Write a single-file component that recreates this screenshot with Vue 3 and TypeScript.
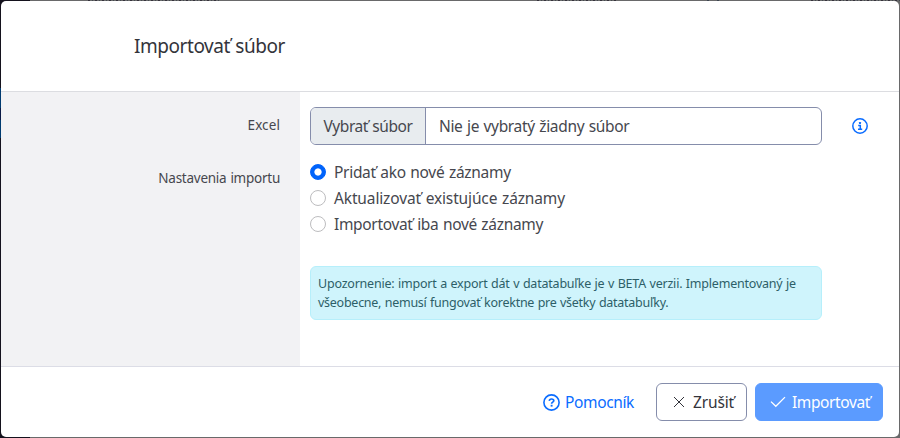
<script setup lang="ts">
import { ref } from 'vue'

interface Option {
  value: string
  label: string
}

const options: Option[] = [
  { value: 'append', label: 'Pridať ako nové záznamy' },
  { value: 'update', label: 'Aktualizovať existujúce záznamy' },
  { value: 'onlynew', label: 'Importovať iba nové záznamy' },
]
const mode = ref('append')
</script>

<template>
  <div class="backdrop">
    <section class="dialog" role="dialog">
      <header class="header">
        <h5 class="title">Importovať súbor</h5>
      </header>

      <div class="body">
        <div class="labels">
          <div class="label label-file">Excel</div>
          <div class="label label-mode">Nastavenia importu</div>
        </div>
        <div class="fields">
          <div class="file-row">
            <div class="file">
              <span class="file-button">Vybrať súbor</span>
              <span class="file-name">Nie je vybratý žiadny súbor</span>
            </div>
            <svg class="info" viewBox="0 0 16 16" fill="none">
              <circle cx="8" cy="8" r="7.2" stroke="currentColor" stroke-width="1.5" />
              <path d="M6.2 7.5H8.3V11.2M6 11.3H10.2" stroke="currentColor" stroke-width="1.5" />
              <rect x="7" y="4" width="2" height="2" rx=".4" fill="currentColor" />
            </svg>
          </div>

          <div class="radios">
            <label v-for="o in options" :key="o.value" class="radio" :class="o.value">
              <input v-model="mode" type="radio" name="mode" :value="o.value" />
              <span>{{ o.label }}</span>
            </label>
          </div>

          <div class="alert">
            <div class="line-one">Upozornenie: import a export dát v datatabuľke je v BETA verzii. Implementovaný je</div>
            <div class="line-two">všeobecne, nemusí fungovať korektne pre všetky datatabuľky.</div>
          </div>
        </div>
      </div>

      <footer class="footer">
        <a class="help">
          <svg class="help-icon" viewBox="0 0 17 17" fill="none" stroke="currentColor">
            <circle cx="8.5" cy="8.5" r="7.6" stroke-width="1.6" />
            <path d="M6.3 6.9C6.4 5.6 7.3 5 8.5 5S10.8 5.7 10.8 6.8C10.8 8.2 8.6 8.1 8.6 9.7" stroke-width="1.7" />
            <path d="M8.6 10.8V12.6" stroke-width="1.9" />
          </svg>
          <span>Pomocník</span>
        </a>
        <button class="btn cancel" type="button">
          <svg class="x-icon" viewBox="0 0 12 12" fill="none" stroke="currentColor">
            <path d="M1 1L11 11M11 1L1 11" stroke-width="1" />
          </svg>
          <span>Zrušiť</span>
        </button>
        <button class="btn submit" type="button">
          <svg class="check-icon" viewBox="0 0 16 12" fill="none" stroke="currentColor">
            <path d="M1 5.6L5.8 10.3L15 1.1" stroke-width="1.3" />
          </svg>
          <span>Importovať</span>
        </button>
      </footer>
    </section>
  </div>
</template>

<style>
body {
  margin: 0;
}
</style>

<style scoped>
* {
  box-sizing: border-box;
}
.backdrop {
  width: 900px;
  height: 438px;
  padding: 1px;
  overflow: hidden;
  font-family: 'Noto Sans', sans-serif;
  color: #46474e;
  background:
    repeating-linear-gradient(90deg, #35323c 0 2px, #696a6b 2px 4px, #444a50 4px 5px, #696969 5px 7px) 88px 0 / 132px 1px no-repeat,
    repeating-linear-gradient(90deg, #35323c 0 2px, #696a6b 2px 4px, #444a50 4px 5px, #696969 5px 7px) 537px 0 / 79px 1px no-repeat,
    repeating-linear-gradient(90deg, #35323c 0 2px, #696a6b 2px 4px, #444a50 4px 5px, #696969 5px 7px) 811px 0 / 89px 1px no-repeat,
    linear-gradient(#3c4550, #3c4550) 707px 0 / 2px 1px no-repeat,
    linear-gradient(#3c4550, #3c4550) 717px 0 / 2px 1px no-repeat,
    linear-gradient(#003b70 0 20px, #0a1a45 20px 32px, #003b70 32px) 0 88px / 1px 50px no-repeat,
    linear-gradient(#14121d, #14121d) 0 0 / 30px 438px no-repeat,
    #69696a;
}
.dialog {
  display: flex;
  flex-direction: column;
  width: 898px;
  height: 436px;
  border-radius: 5px;
  overflow: hidden;
  background: #fff;
}
.header {
  display: flex;
  align-items: center;
  height: 91px;
  padding-left: 133px;
  border-bottom: 1px solid #dcdde1;
}
.title {
  margin: 0;
  font-size: 19px;
  font-weight: 400;
  line-height: 28px;
  letter-spacing: -0.45px;
  word-spacing: 1px;
  color: #33343b;
}
.body {
  display: flex;
  height: 274px;
}
.labels {
  width: 299px;
  padding: 23px 20px 0 0;
  background: #f2f2f4;
  text-align: right;
}
.label {
  font-size: 13.5px;
  line-height: 20px;
}
.label-file {
  letter-spacing: 0.1px;
}
.label-mode {
  margin-top: 33px;
  letter-spacing: -0.25px;
  word-spacing: 0.7px;
}
.fields {
  flex: 1;
  padding: 15px 0 0 10px;
}
.file-row {
  display: flex;
  align-items: center;
}
.file {
  display: flex;
  width: 512px;
  height: 38px;
  border: 1px solid #858dab;
  border-radius: 6px;
  overflow: hidden;
  font-size: 15.5px;
  line-height: 37px;
  white-space: nowrap;
}
.file-button {
  width: 115px;
  padding-left: 12.5px;
  border-right: 1px solid #858dab;
  background: #e8ecef;
  letter-spacing: -0.43px;
  word-spacing: 0.7px;
}
.file-name {
  padding-left: 13px;
  letter-spacing: -0.34px;
  word-spacing: 0.8px;
}
.info {
  width: 16px;
  height: 16px;
  margin-left: 30px;
  color: #0a6cff;
}
.radios {
  display: flex;
  flex-direction: column;
  margin-top: 14px;
}
.radio {
  display: flex;
  align-items: center;
  gap: 8px;
  height: 26px;
  font-size: 15.5px;
  white-space: nowrap;
}
.radio input {
  appearance: none;
  width: 16px;
  height: 16px;
  margin: 0;
  border: 1px solid #bdbdbf;
  border-radius: 50%;
  background: #fff;
}
.radio input:checked {
  border-color: #0063fb;
  background: radial-gradient(circle, #fff 3.2px, #0063fb 4px);
}
.append {
  letter-spacing: -0.3px;
  word-spacing: 0.8px;
}
.update {
  letter-spacing: -0.135px;
  word-spacing: 0.8px;
}
.onlynew {
  letter-spacing: -0.325px;
  word-spacing: 0.8px;
}
.alert {
  width: 512px;
  height: 54px;
  margin-top: 29px;
  padding: 7px;
  border: 1px solid #b6effb;
  border-radius: 6px;
  background: #cff4fc;
  color: #2d5f68;
  font-size: 12.5px;
  line-height: 19px;
  white-space: nowrap;
}
.line-one {
  letter-spacing: -0.21px;
  word-spacing: 0.5px;
}
.line-two {
  letter-spacing: -0.26px;
  word-spacing: 0.5px;
}
.footer {
  display: flex;
  align-items: center;
  justify-content: flex-end;
  height: 71px;
  padding-right: 16px;
  border-top: 1px solid #dcdde6;
  font-size: 15.5px;
  white-space: nowrap;
}
.help {
  display: flex;
  align-items: center;
  width: 113px;
  color: #0a6cff;
  letter-spacing: -0.36px;
}
.help-icon {
  width: 17px;
  height: 17px;
  margin-right: 5px;
}
.btn {
  display: flex;
  align-items: center;
  height: 38px;
  padding: 0;
  border: 1px solid #858dab;
  border-radius: 6px;
  background: #fff;
  color: #33343b;
  font: inherit;
}
.cancel {
  width: 91px;
  padding-left: 16px;
  letter-spacing: -0.15px;
}
.x-icon {
  width: 12px;
  height: 12px;
  margin-right: 8px;
}
.submit {
  width: 128px;
  margin-left: 8px;
  padding-left: 14px;
  border-color: #5b9bff;
  background: #5b9bff;
  color: #fff;
  letter-spacing: -0.39px;
}
.check-icon {
  width: 16px;
  height: 12px;
  margin-right: 6px;
}
</style>
